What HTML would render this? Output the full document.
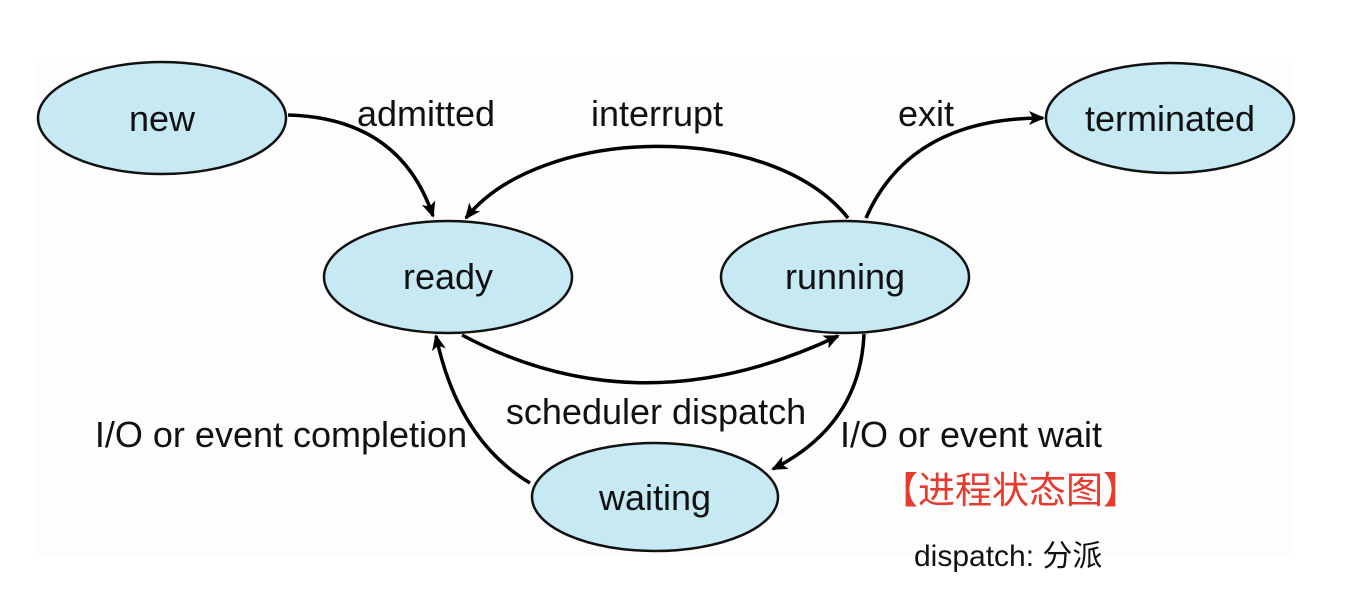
<!DOCTYPE html>
<html><head><meta charset="utf-8"><style>
html,body{margin:0;padding:0;background:#fff;}
svg{display:block}
text{font-family:"Liberation Sans","Noto Sans CJK SC",sans-serif;fill:#111;}
</style></head><body>
<svg width="1354" height="597" viewBox="0 0 1354 597" xmlns="http://www.w3.org/2000/svg">
<defs>
<marker id="b" markerWidth="18" markerHeight="18" refX="14" refY="9" orient="auto" markerUnits="userSpaceOnUse">
<path d="M0,2 L16,9 L0,16 L4,9 Z" fill="#000"/>
</marker>
</defs>
<rect x="35" y="62" width="1258" height="494" fill="#fdfdfd"/>
<g fill="#c6e9f4" stroke="#111" stroke-width="2.5">
<ellipse cx="162" cy="118" rx="124" ry="56"/>
<ellipse cx="448" cy="277" rx="124" ry="56"/>
<ellipse cx="845" cy="277" rx="124" ry="56"/>
<ellipse cx="1170" cy="118" rx="124" ry="55"/>
<ellipse cx="655" cy="497" rx="123" ry="54"/>
</g>
<g fill="none" stroke="#000" stroke-width="3.5" marker-end="url(#b)">
<path d="M288,115 Q400,118 433,216"/>
<path d="M848,218 C770,120 540,125 466,218"/>
<path d="M866,218 Q910,118 1043,118"/>
<path d="M462,335 Q640,430 838,336"/>
<path d="M864,334 Q860,425 773,469"/>
<path d="M530,483 Q458,440 436,336"/>
</g>
<g font-size="36" text-anchor="middle">
<text x="162" y="131">new</text>
<text x="448" y="289">ready</text>
<text x="845" y="289">running</text>
<text x="1170" y="131">terminated</text>
<text x="655" y="510">waiting</text>
<text x="426" y="126">admitted</text>
<text x="657" y="126">interrupt</text>
<text x="926" y="126">exit</text>
<text x="656" y="424">scheduler dispatch</text>
<text x="281" y="447">I/O or event completion</text>
<text x="971" y="447">I/O or event wait</text>
</g>
<text x="881" y="503" font-size="37" style="fill:#e53a2e">【进程状态图】</text>
<text x="914" y="566" font-size="30">dispatch: 分派</text>
</svg>
</body></html>
